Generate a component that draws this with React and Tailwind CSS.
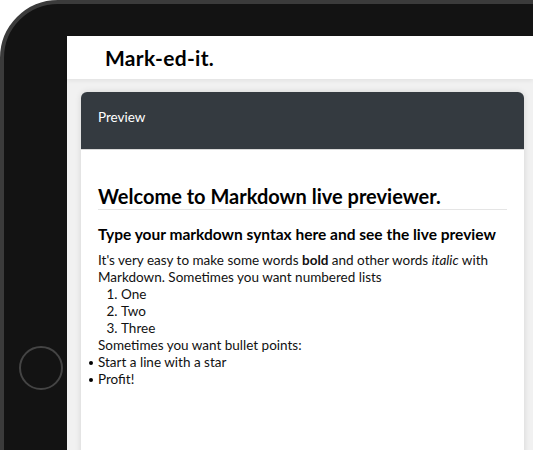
import React from 'react';

const font = { fontFamily: 'Lato, "Noto Sans", sans-serif' };

const Preview = () => (
  <div className="flex-1 bg-white px-[17px] pt-[34px] text-[13.5px] leading-[17px] text-[#111]">
    <h1 className="border-b border-[#e5e5e5] pb-[1px] text-[20px] font-bold leading-[24px] text-black">
      Welcome to Markdown live previewer.
    </h1>
    <h2 className="mt-[14px] text-[15.5px] font-bold leading-[20px] text-black">
      Type your markdown syntax here and see the live preview
    </h2>
    <p className="mt-[8px]">
      It's very easy to make some words <strong>bold</strong> and other words <em>italic</em> with
      Markdown. Sometimes you want numbered lists
    </p>
    <ol className="list-decimal pl-[23px]">
      <li>One</li>
      <li>Two</li>
      <li>Three</li>
    </ol>
    <p>Sometimes you want bullet points:</p>
    <ul>
      {['Start a line with a star', 'Profit!'].map((item) => (
        <li key={item} className="flex items-center">
          <span className="-ml-[9px] mr-[5px] h-[4px] w-[4px] rounded-full bg-black" />
          {item}
        </li>
      ))}
    </ul>
  </div>
);

export default function App() {
  return (
    <div className="h-[450px] w-[533px] overflow-hidden bg-white" style={font}>
      {/* tablet frame */}
      <div className="flex h-[480px] w-[560px] rounded-tl-[58px] border-4 border-[#3b3b3b] bg-[#131313] pt-[32px]">
        {/* left bezel with home button */}
        <div className="w-[63px] shrink-0">
          <div className="ml-[15px] mt-[310px] h-[44px] w-[44px] rounded-full border-2 border-[#444]" />
        </div>

        {/* screen */}
        <div className="flex w-[466px] flex-col bg-[#f1f1f1]">
          <header className="flex h-[43px] shrink-0 items-center bg-white pl-[38px] shadow-[0_2px_4px_rgba(0,0,0,0.06)]">
            <span className="text-[21px] font-bold tracking-[0.3px] text-black">Mark-ed-it.</span>
          </header>

          <main className="flex flex-1 flex-col pl-[14px] pr-[9px] pt-[13px]">
            <div className="flex flex-1 flex-col overflow-hidden rounded-t-[6px] shadow-[0_0_6px_rgba(0,0,0,0.12)]">
              <div className="h-[58px] shrink-0 border-b border-[#d8d8d8] bg-[#343a40] px-[17px] pt-[17px] text-[13.5px] leading-[17px] text-white">
                Preview
              </div>
              <Preview />
            </div>
          </main>
        </div>
      </div>
    </div>
  );
}
